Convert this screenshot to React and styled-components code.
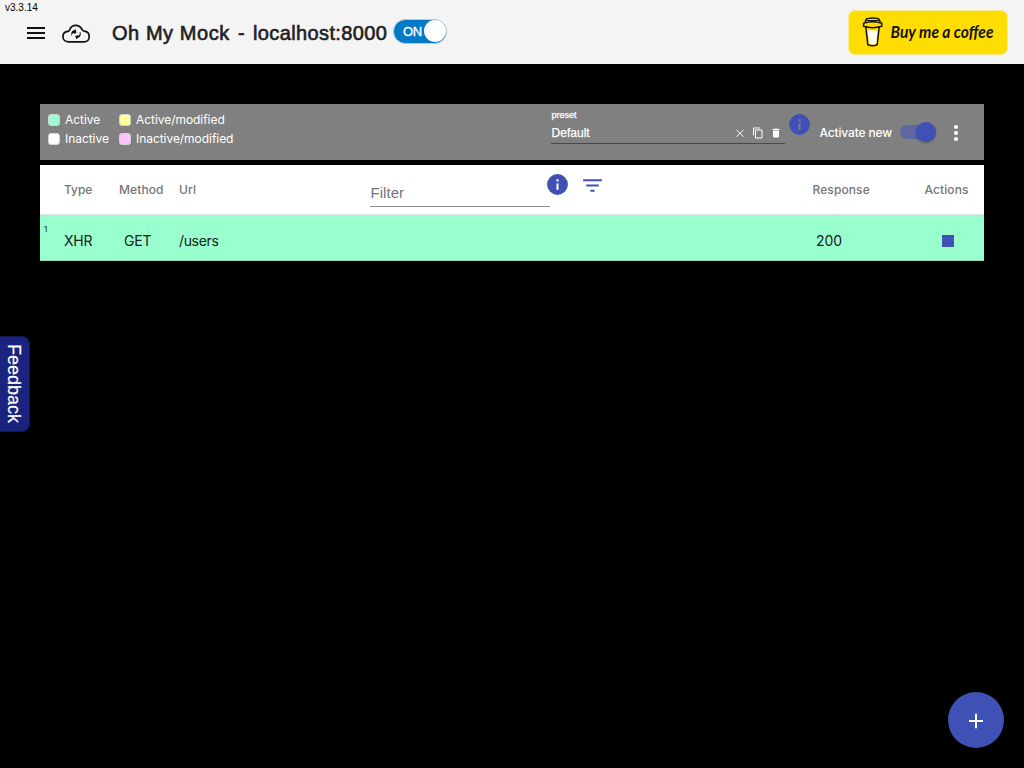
import React from "react";
import styled, { createGlobalStyle } from "styled-components";

const Global = createGlobalStyle`
  *, *::before { box-sizing: border-box; }
  html, body { margin: 0; background: #000; overflow: hidden; }
  body { font-family: Inter, "Liberation Sans", sans-serif; }
  svg { display: block; flex: none; }
`;

const Page = styled.div`
  position: relative;
  width: 1024px;
  height: 768px;
  background: #000;
  overflow: hidden;
`;

const Header = styled.header`
  position: relative;
  display: flex;
  align-items: center;
  height: 64px;
  padding: 0 16px 0 27px;
  background: #f4f4f4;
  color: #212121;
`;

const Version = styled.span`
  position: absolute;
  left: 5px;
  top: 2px;
  font: 10px/12px "Liberation Sans", sans-serif;
  color: #000;
`;

const MenuLines = styled.div`
  display: flex;
  flex-direction: column;
  gap: 3px;
  width: 18px;
  margin: 2px 17px 0 0;
  & > i { height: 2px; background: #111; }
`;

const Title = styled.h1`
  display: flex;
  margin: 2px 0 0 21px;
  font: 400 20px/28px "Liberation Sans", sans-serif;
  -webkit-text-stroke: 0.6px #212121;
  white-space: nowrap;
  width: 281px;
`;

const TitlePart = styled.span`
  width: ${(p) => p.$width}px;
  letter-spacing: ${(p) => p.$track}px;
`;

const OnSwitch = styled.div`
  display: flex;
  align-items: center;
  justify-content: space-between;
  width: 54px;
  height: 25px;
  margin-top: -2px;
  padding: 0 1px 0 9px;
  border: 1px solid #b5cad8;
  border-radius: 13px;
  background: #0079c9;
  color: #fff;
  font: 400 13px/23px "Liberation Sans", sans-serif;
  -webkit-text-stroke: 0.35px #fff;
  letter-spacing: -0.3px;
  & > i { width: 22px; height: 22px; margin-right: -1px; border-radius: 50%; background: #fff; }
`;

const Coffee = styled.div`
  display: flex;
  margin-left: auto;
  width: 160px;
  height: 45px;
  border: 1px solid #faeb8b;
  border-radius: 7px;
  background: #ffdd00;
  & > svg { margin: -1px; }
`;

const Main = styled.main`
  padding: 40px;
`;

const Toolbar = styled.section`
  display: flex;
  height: 56px;
  padding-left: 8px;
  background: #808080;
  color: #fff;
`;

const Legend = styled.div`
  display: grid;
  grid-template-columns: 71px 130px;
  grid-template-rows: 19px 19px;
  width: 503px;
  padding-top: 6px;
`;

const LegendItem = styled.div`
  display: flex;
  align-items: center;
  gap: 5px;
  font-size: 12px;
  line-height: 19px;
  letter-spacing: -0.05px;
  white-space: nowrap;
  &::before {
    content: "";
    width: 12px;
    height: 12px;
    border: 1px solid #d3d3d3;
    border-radius: 3px;
    background: ${(p) => p.$color};
  }
`;

const Preset = styled.div`
  width: 234px;
  height: 40px;
  padding-top: 6px;
  border-bottom: 1px solid #484848;
`;

const PresetLabel = styled.div`
  padding-left: 0.5px;
  font: 9px/10px "Liberation Sans", sans-serif;
  -webkit-text-stroke: 0.25px #fff;
`;

const PresetValue = styled.div`
  display: flex;
  align-items: center;
  height: 24px;
  padding: 2px 3px 0 0.5px;
  font: 12px/20px "Liberation Sans", sans-serif;
  -webkit-text-stroke: 0.25px #fff;
  letter-spacing: 0.03px;
  & > span { width: 182.5px; flex: none; }
  & > svg { margin-right: 6px; }
  & > svg:last-child { margin-right: 0; }
`;

const ToolInfo = styled.div`
  padding: 7.5px 0 0 2px;
  width: 34.5px;
`;

const Activate = styled.div`
  display: flex;
  align-items: center;
  height: 56px;
  font-size: 12px;
  font-weight: 500;
  letter-spacing: -0.15px;
  & > span { width: 80.5px; white-space: nowrap; }
`;

const Toggle = styled.div`
  display: flex;
  align-items: center;
  justify-content: flex-end;
  width: 36px;
  height: 14px;
  border-radius: 7px;
  background: #5f66a0;
  & > i {
    width: 20px;
    height: 20px;
    border-radius: 50%;
    background: #3f51b5;
    box-shadow: 0 1px 2px #0005;
  }
`;

const Dots = styled.div`
  display: flex;
  flex-direction: column;
  gap: 2px;
  margin: 2px 0 0 18px;
  & > i { width: 4px; height: 4px; border-radius: 50%; background: #fff; }
`;

const Table = styled.section`
  margin-top: 5px;
`;

const TableRow = styled.div`
  display: grid;
  grid-template-columns: 55px 60px 191px 442.5px 112px 60px;
  padding-left: 24px;
`;

const HeadRow = styled(TableRow)`
  height: 50px;
  background: #fff;
  border-bottom: 1px solid #e0e0e0;
  color: #757575;
  font-size: 12px;
  font-weight: 500;
  line-height: 49px;
  letter-spacing: 0.1px;
`;

const FilterCell = styled.div`
  display: flex;
  align-items: flex-start;
`;

const FilterInput = styled.div`
  width: 180px;
  height: 42px;
  padding: 14px 0 0 0.5px;
  border-bottom: 1px solid #8c8c8c;
  font: 15px/28px "Liberation Sans", sans-serif;
  letter-spacing: 0.05px;
  color: #757575;
`;

const FilterIcons = styled.div`
  display: flex;
  margin: 7px 0 0 -5px;
  gap: 10px;
  & > svg:last-child { margin-top: 1px; }
`;

const BodyRow = styled(TableRow)`
  position: relative;
  height: 46px;
  background: #99ffcf;
  border-bottom: 1px solid #8bdcb6;
  color: #152019;
  font-size: 14px;
  line-height: 52px;
`;

const Cell = styled.div`
  padding-left: ${(p) => p.$indent || 0}px;
  letter-spacing: ${(p) => (p.$track === undefined ? "inherit" : `${p.$track}px`)};
`;

const RowNumber = styled.span`
  position: absolute;
  left: 4px;
  top: 9px;
  font-size: 8px;
  line-height: 10px;
`;

const Stop = styled.div`
  width: 12px;
  height: 12px;
  margin: 20px 0 0 17.5px;
  background: #3f51b5;
`;

const Feedback = styled.div`
  position: absolute;
  left: 0;
  top: 336px;
  display: flex;
  align-items: center;
  justify-content: center;
  width: 30px;
  height: 96px;
  padding: 0 2px 0 0;
  border: 1px solid #111752;
  border-left: 0;
  border-radius: 0 8px 8px 0;
  background: #1a237e;
  color: #fff;
  font: 18px/28px "Liberation Sans", sans-serif;
  writing-mode: vertical-rl;
  -webkit-text-stroke: 0.2px #fff;
`;

const Fab = styled.div`
  position: absolute;
  right: 20px;
  bottom: 20px;
  display: flex;
  align-items: center;
  justify-content: center;
  width: 56px;
  height: 56px;
  padding-top: 2px;
  border-radius: 50%;
  background: #3f51b5;
`;

const InfoIcon = ({ color = "#fff" }) => (
  <svg width="25" height="25" viewBox="0 0 24 24">
    <path fill="#3f51b5" d="M12 2a10 10 0 1 0 0 20 10 10 0 0 0 0-20z" />
    <path fill={color} d="M11 11h2v6h-2zM11 7h2v2h-2z" />
  </svg>
);

const CloudSvg = styled.svg`
  margin-top: 3px;
`;

const CloudIcon = () => (
  <CloudSvg width="29" height="20" viewBox="0 0 29 20">
    <path d="M6.8 17.9C3.3 17.9.9 15.7.9 12.8c0-2.9 2.1-5.1 5.1-5.4 1-.1 1.2-.8 1.8-2 1.1-2.5 3.1-4 5.8-4 3.3 0 5.4 1.8 6.6 4.3.4.9.9 1.3 1.9 1.4 3.2.3 5.1 2.6 5.1 5.4 0 3.1-2 5.4-5.1 5.4Z" fill="none" stroke="#111" strokeWidth="1.7" />
    <path d="M10 12.2C8.5 9.1 9.5 6.4 12.8 5.9l1-.7.6 3.9-2.6.8.2-1.1c-1.5.5-2.3 1.7-2 3.4Z" fill="#111" />
    <path d="m13.2 11.9 3.6-.8-.5 1.2c1.1-.7 1.7-2 1.3-3.7l.9-.5c.8 3.1-.5 5.5-2.9 6.1l-1.2 1Z" fill="#111" />
  </CloudSvg>
);

const CoffeeArt = () => (
  <svg width="160" height="45" viewBox="0 0 160 45">
    <path d="m17.8 17 2 17.7q4.8 2.1 9.4 0l2-17.7Z" fill="#ffdd00" stroke="#15130b" strokeWidth="1.5" strokeLinejoin="round" />
    <path d="m19.8 20.5 1.5 13.2q3.4 1 6.8 0l1.3-13.2Z" fill="#fff" />
    <path d="m17 12 1.5-2.8q6-1.7 12.1 0L32.5 12M15.6 13.2q9-3 18.2 0v3.1q-9.1 2.7-18.2 0Z" fill="#ffdd00" stroke="#15130b" strokeWidth="1.5" strokeLinejoin="round" />
    <ellipse cx="24.6" cy="9.4" rx="6.4" ry="1.3" fill="#ffdd00" stroke="#15130b" strokeWidth="1.3" />
    <text x="42.5" y="27.8" textLength="103" lengthAdjust="spacingAndGlyphs" fontFamily="Lato, sans-serif" fontStyle="italic" fontWeight="700" fontSize="17" fill="#15130b">Buy me a coffee</text>
  </svg>
);

export default function App() {
  return (
    <Page>
      <Global />
      <Header>
        <Version>v3.3.14</Version>
        <MenuLines><i /><i /><i /></MenuLines>
        <CloudIcon />
        <Title>
          <TitlePart $width={126} $track={0.55}>Oh My Mock</TitlePart>
          <TitlePart $width={15} $track={0}>-</TitlePart>
          <TitlePart $width={140} $track={0.38}>localhost:8000</TitlePart>
        </Title>
        <OnSwitch>ON<i /></OnSwitch>
        <Coffee><CoffeeArt /></Coffee>
      </Header>
      <Main>
        <Toolbar>
          <Legend>
            <LegendItem $color="#99ffcf">Active</LegendItem>
            <LegendItem $color="#ffff99">Active/modified</LegendItem>
            <LegendItem $color="#fff">Inactive</LegendItem>
            <LegendItem $color="#ffc4ff">Inactive/modified</LegendItem>
          </Legend>
          <Preset>
            <PresetLabel>preset</PresetLabel>
            <PresetValue>
              <span>Default</span>
              <svg width="12" height="12" viewBox="0 0 12 12"><path d="m2.5 2.8 7 7m0-7-7 7" stroke="#fff" strokeWidth="1" /></svg>
              <svg width="12" height="12" viewBox="0 0 24 24"><path fill="#fff" d="M16 1H4c-1.1 0-2 .9-2 2v14h2V3h12V1zm3 4H8c-1.1 0-2 .9-2 2v14c0 1.1.9 2 2 2h11c1.1 0 2-.9 2-2V7c0-1.1-.9-2-2-2zm0 16H8V7h11v14z" /></svg>
              <svg width="12" height="12" viewBox="0 0 24 24"><path fill="#fff" d="M6 19c0 1.1.9 2 2 2h8c1.1 0 2-.9 2-2V7H6v12zM19 4h-3.5l-1-1h-5l-1 1H5v2h14V4z" /></svg>
            </PresetValue>
          </Preset>
          <ToolInfo><InfoIcon color="#808080" /></ToolInfo>
          <Activate>
            <span>Activate new</span>
            <Toggle><i /></Toggle>
            <Dots><i /><i /><i /></Dots>
          </Activate>
        </Toolbar>
        <Table>
          <HeadRow>
            <Cell $track={-0.05}>Type</Cell>
            <Cell>Method</Cell>
            <Cell>Url</Cell>
            <FilterCell>
              <FilterInput>Filter</FilterInput>
              <FilterIcons>
                <InfoIcon />
                <svg width="25" height="25" viewBox="0 0 24 24"><path fill="#3f51b5" d="M10 18h4v-2h-4v2zM3 6v2h18V6H3zm3 7h12v-2H6v2z" /></svg>
              </FilterIcons>
            </FilterCell>
            <Cell>Response</Cell>
            <Cell>Actions</Cell>
          </HeadRow>
          <BodyRow>
            <RowNumber>1</RowNumber>
            <Cell $track={-0.2}>XHR</Cell>
            <Cell $indent={5} $track={-0.2}>GET</Cell>
            <Cell $track={-0.35}>/users</Cell>
            <Cell />
            <Cell $indent={3.5} $track={-0.1}>200</Cell>
            <Stop />
          </BodyRow>
        </Table>
      </Main>
      <Feedback>Feedback</Feedback>
      <Fab>
        <svg width="16" height="16" viewBox="0 0 16 16"><path d="M8 .7v14.6M1 8h14" stroke="#fff" strokeWidth="2" /></svg>
      </Fab>
    </Page>
  );
}
